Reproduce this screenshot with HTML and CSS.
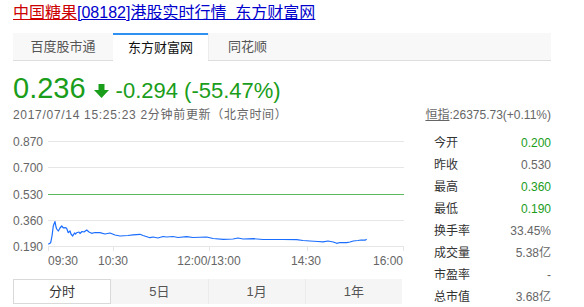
FILE: index.html
```html
<!DOCTYPE html>
<html lang="zh-CN">
<head>
    <meta charset="UTF-8">
    <title>中国糖果[08182]港股实时行情</title>
    <link rel="stylesheet" href="styles.css">
</head>
<body>
    <div class="page">
        <div class="title">
            <a class="name" href="#">中国糖果</a><a class="code" href="#">[08182]港股实时行情&nbsp; 东方财富网</a>
        </div>

        <div class="tabs">
            <span class="tab tab-baidu">百度股市通</span>
            <span class="tab tab-east active">东方财富网</span>
            <span class="tab tab-ths">同花顺</span>
        </div>

        <div class="quote">
            <div class="quote-main">
                <div class="price-row">
                    <span class="price">0.236</span>
                    <svg class="arrow" width="15" height="14" viewBox="0 0 15 14">
                        <path d="M4.5 0H10.5V6H15L7.5 14L0 6H4.5Z" fill="#1a9d1a"/>
                    </svg>
                    <span class="change">-0.294 (-55.47%)</span>
                </div>
                <div class="updated">2017/07/14 15:25:23 2分钟前更新（北京时间）</div>
            </div>
            <div class="index"><a href="#">恒指</a>:26375.73(+0.11%)</div>
        </div>

        <div class="board">
            <div class="chart-col">
                <svg class="chart" width="391" height="135" viewBox="0 0 391 135">
                    <g stroke="#e6e6e6" stroke-width="1">
                        <line x1="35" y1="9.5" x2="391" y2="9.5"/>
                        <line x1="35" y1="35.5" x2="391" y2="35.5"/>
                        <line x1="35" y1="88.5" x2="391" y2="88.5"/>
                        <line x1="35" y1="114.5" x2="391" y2="114.5"/>
                        <line x1="35.5" y1="114" x2="35.5" y2="119"/>
                        <line x1="100.5" y1="114" x2="100.5" y2="119"/>
                        <line x1="196.5" y1="114" x2="196.5" y2="119"/>
                        <line x1="294.5" y1="114" x2="294.5" y2="119"/>
                        <line x1="390.5" y1="114" x2="390.5" y2="119"/>
                    </g>
                    <line x1="35" y1="62.5" x2="391" y2="62.5" stroke="#5cb85c" stroke-width="1"/>
                    <polyline fill="none" stroke="#1a6dff" stroke-width="1.2" stroke-linejoin="round"
                        points="35.3,112.3 37.7,110.7 39,104 40.3,94 41,92 42,89.5 43,95 43.7,97 45.3,99 47,96 48.7,94 50.5,96 52,95.7 53.5,96 55.3,100.7 57,99 58,102 59.7,104 61.5,101 62.5,102 63.7,100.7 66,100 67,101.5 69,99.5 71,100 73.7,98 76,100 78.7,101.3 82,100.5 87,100.7 92,102 97,101 102,103 107,104 115,103.5 120,102.8 127,102.3 130,103.5 137,105.7 140,105 145,106 150,104.5 153.7,105 160,104.5 165,105.5 173.7,104.7 180,105.5 193.7,105 200,106.5 210.3,107.3 220,107 225,106 230,107 240.3,106.7 250,107.5 270,107.5 283.7,107.7 290,108.5 297,109 305,109.5 310,109.8 315,109 320.3,110 323.7,111.3 327,110.5 333.7,110.7 337,110 340.3,109 345,108.5 348,108 352,108.2 353.7,107.3"/>
                    <g class="axis-text">
                        <text x="0" y="14">0.870</text>
                        <text x="0" y="40">0.700</text>
                        <text x="0" y="67">0.530</text>
                        <text x="0" y="93">0.360</text>
                        <text x="0" y="119">0.190</text>
                        <text x="35" y="133">09:30</text>
                        <text x="100" y="133" text-anchor="middle">10:30</text>
                        <text x="196" y="133" text-anchor="middle">12:00/13:00</text>
                        <text x="293" y="133" text-anchor="middle">14:30</text>
                        <text x="390" y="133" text-anchor="end">16:00</text>
                    </g>
                </svg>
                <div class="periods">
                    <span class="period active">分时</span>
                    <span class="period">5日</span>
                    <span class="period">1月</span>
                    <span class="period">1年</span>
                </div>
            </div>

            <ul class="stats">
                <li><span>今开</span><span class="up">0.200</span></li>
                <li><span>昨收</span><span>0.530</span></li>
                <li><span>最高</span><span class="up">0.360</span></li>
                <li><span>最低</span><span class="up">0.190</span></li>
                <li><span>换手率</span><span>33.45%</span></li>
                <li><span>成交量</span><span>5.38亿</span></li>
                <li><span>市盈率</span><span>-</span></li>
                <li><span>总市值</span><span>3.68亿</span></li>
            </ul>
        </div>
    </div>
</body>
</html>
```

FILE: styles.css
```css
body {
    margin: 0;
    padding: 0;
    background: #fff;
    font-family: "Liberation Sans", Arial, "Noto Sans CJK SC", sans-serif;
    color: #333;
}

.page {
    padding: 2px 0 0 13px;
    width: 538px;
}

.title {
    font-size: 16px;
    line-height: 22px;
    white-space: nowrap;
}

.title a {
    text-decoration: underline;
}

.title .name {
    color: #cc0000;
}

.title .code {
    color: #0000cc;
}

.tabs {
    display: flex;
    margin-top: 9px;
    height: 27px;
    background: #f8f8f8;
    border-bottom: 1px solid #dddddd;
}

.tab {
    font-size: 13px;
    line-height: 27px;
    text-align: center;
    color: #555;
}

.tab-baidu {
    width: 100px;
}

.tab-east {
    width: 95px;
}

.tab-ths {
    width: 77px;
    border-left: 1px solid #ececec;
}

.tab.active {
    background: #fff;
    color: #111;
    border-top: 2px solid #2e90f0;
    line-height: 26px;
    height: 26px;
    margin-bottom: -1px;
}

.quote {
    display: flex;
    justify-content: space-between;
    align-items: flex-end;
    margin-top: 10px;
}

.price-row {
    display: flex;
    align-items: baseline;
    height: 34px;
    line-height: 34px;
    color: #1a9d1a;
}

.price {
    font-size: 29px;
}

.arrow {
    margin: 0 7px 1px 8px;
}

.change {
    font-size: 22px;
}

.updated {
    margin-top: 1px;
    font-size: 12px;
    line-height: 18px;
    letter-spacing: 0.7px;
    color: #666;
}

.index {
    font-size: 12px;
    line-height: 18px;
    color: #666;
}

.index a {
    color: #666;
    text-decoration: underline;
}

.board {
    display: flex;
    margin-top: 8px;
}

.chart-col {
    width: 391px;
}

.chart {
    display: block;
}

.axis-text text {
    font-family: "Liberation Sans", Arial, sans-serif;
    font-size: 12px;
    fill: #666;
}

.periods {
    display: flex;
    width: 389px;
    height: 25px;
    margin-top: 12px;
    background: #f5f5f5;
}

.period {
    flex: 1;
    font-size: 13px;
    line-height: 25px;
    text-align: center;
    color: #555;
    border-left: 1px solid #ebebeb;
}

.period:nth-child(2) {
    border-left: none;
}

.period.active {
    background: #fff;
    color: #333;
    border: 1px solid #d9d9d9;
    line-height: 23px;
}

.stats {
    list-style: none;
    margin: 0 0 0 30px;
    padding: 0;
    width: 117px;
}

.stats li {
    display: flex;
    justify-content: space-between;
    font-size: 12px;
    line-height: 22px;
    color: #333;
}

.stats li span:last-child {
    color: #666;
}

.stats li span.up {
    color: #1a9d1a;
}
```
